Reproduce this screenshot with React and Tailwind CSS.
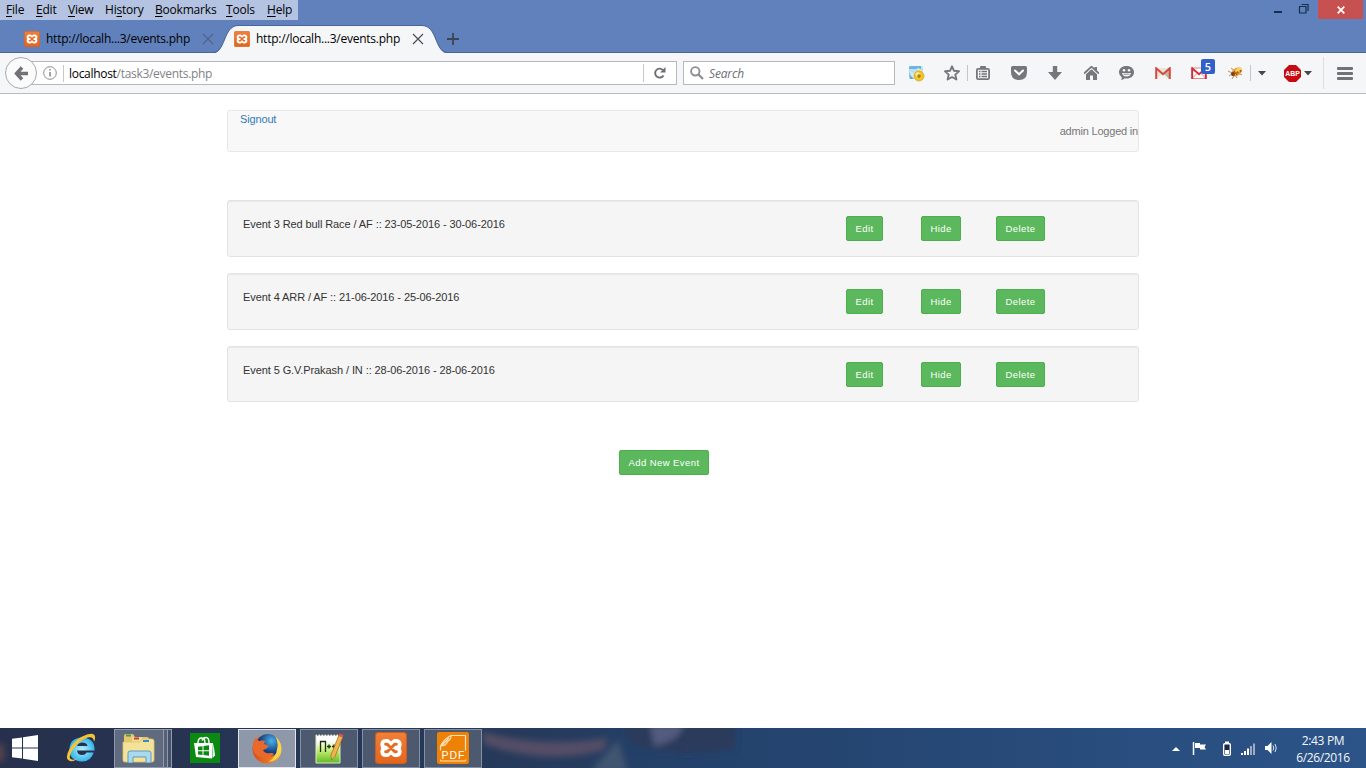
import React from "react";

const ui = "font-['Open_Sans','Noto_Sans',sans-serif]";

function Xampp({ size, id }) {
  return (
    <svg width={size} height={size} viewBox="0 0 30 30" className="block shrink-0">
      <defs>
        <linearGradient id={id} x1="0" y1="0" x2="0" y2="1">
          <stop offset="0" stopColor="#f0803a" />
          <stop offset="1" stopColor="#e4651c" />
        </linearGradient>
      </defs>
      <rect x="0.5" y="0.5" width="29" height="29" rx="3" fill={`url(#${id})`} stroke="#d05c1c" />
      <path
        d="M10.500 9h1l3.500 3.200L18.500 9h1q3 0 3 3 0 1.800-1.500 3 1.500 1.200 1.500 3 0 3-3 3h-1L15 17.800 11.500 21h-1q-3 0-3-3 0-1.800 1.500-3-1.500-1.200-1.500-3 0-3 3-3z"
        fill="#fff"
        stroke="#fff"
        strokeWidth="5"
        strokeLinejoin="round"
      />
      <path
        d="M10 11.500h1.500L15 15l3.500-3.500H20M10 18.500h1.500L15 15l3.500 3.500H20"
        fill="none"
        stroke="#e66b22"
        strokeWidth="2.800"
        strokeLinecap="round"
        strokeLinejoin="round"
      />
    </svg>
  );
}

const menus = [
  ["", "F", "ile", "w-[30px]"],
  ["", "E", "dit", "w-[32px]"],
  ["", "V", "iew", "w-[37px]"],
  ["Hi", "s", "tory", "w-[50px]"],
  ["", "B", "ookmarks", "w-[71px]"],
  ["", "T", "ools", "w-[41px]"],
  ["", "H", "elp", "w-[31px]"],
];

function CloseX({ color }) {
  return (
    <svg width="12" height="12" viewBox="0 0 12 12" className="shrink-0">
      <path d="M1 1L11 11M11 1L1 11" stroke={color} strokeWidth="1.200" />
    </svg>
  );
}

function TitleBar() {
  return (
    <div className="flex h-[20px] justify-between">
      <div className={`flex h-[20px] w-[298px] items-center bg-[#b3c3e1] pl-[6px] text-[12px] leading-[20px] text-black ${ui}`}>
        {menus.map(([a, u, b, w]) => (
          <span key={u + b} className={`${w} shrink-0 whitespace-nowrap tracking-[-0.200px]`}>
            {a}
            <span className="underline underline-offset-2">{u}</span>
            {b}
          </span>
        ))}
      </div>
      <div className="flex h-[19px]">
        <svg width="52" height="19" viewBox="0 0 52 19">
          <path d="M8 12h8" stroke="#172f4c" strokeWidth="2" />
          <path d="M33.500 6.500h6.500v6.500h-6.500zM35.500 4.500h6.500V11" fill="none" stroke="#172f4c" strokeWidth="1.200" />
        </svg>
        <div className="flex w-[45px] items-center justify-center bg-[#c75050]">
          <svg width="8" height="8" viewBox="0 0 8 8">
            <path d="M0.700 0.700l6.600 6.600M7.300 0.700L0.700 7.300" stroke="#fff" strokeWidth="1.700" />
          </svg>
        </div>
        <div className="w-[3px]" />
      </div>
    </div>
  );
}

function Tabs() {
  const title = "w-[152px] shrink-0 whitespace-nowrap text-[12px] tracking-[-0.250px] text-black";
  return (
    <div className={`flex h-[33px] items-center border-b border-[#49659a] pt-[5px] ${ui}`}>
      <div className="flex w-[210px] items-center pl-[24px]">
        <Xampp size={16} id="xa" />
        <span className={`ml-[6px] ${title}`}>http://localh...3/events.php</span>
        <span className="ml-[4px] flex"><CloseX color="#50638a" /></span>
      </div>
      <div className="relative flex h-[28px] w-[238px] items-center">
        <svg width="238" height="29" viewBox="0 0 238 29" className="absolute left-0 top-0">
          <path d="M3 28.500C16 28 13 1 28 .5H212C228 1 224 28 238 28.500V29H3z" fill="#f5f6f7" />
          <path d="M3 27.500C16 27 13 1 28 .5H212C228 1 224 27 238 27.500" fill="none" stroke="#49659a" strokeWidth="1" />
        </svg>
        <div className="relative flex items-center pl-[24px]">
          <Xampp size={16} id="xb" />
          <span className={`ml-[6px] ${title}`}>http://localh...3/events.php</span>
          <span className="ml-[4px] flex"><CloseX color="#4a4d52" /></span>
        </div>
      </div>
      <svg width="12" height="12" viewBox="0 0 12 12" className="-ml-px">
        <path d="M6 0v12M0 6h12" stroke="#3c4553" strokeWidth="1.800" />
      </svg>
    </div>
  );
}

const g = "#75777b";

function Slot({ w, children }) {
  return <div className={`${w} flex h-[40px] shrink-0 items-center justify-center`}>{children}</div>;
}

function Caret() {
  return (
    <svg width="8" height="5" viewBox="0 0 8 5">
      <path d="M0 0h8L4 4.500z" fill="#45484c" />
    </svg>
  );
}

function Toolbar() {
  return (
    <div className={`flex h-[41px] items-center border-b border-[#b9bbbf] bg-[#f5f6f7] ${ui}`}>
      <div className="z-10 ml-[5px] flex h-[32px] w-[32px] shrink-0 items-center justify-center rounded-full border border-[#a7a9ac] bg-[#fbfbfb]">
        <svg width="15" height="15" viewBox="0 0 15 15">
          <path d="M8 1.500L2.500 7.500 8 13.500M3 7.500h11" fill="none" stroke="#707276" strokeWidth="3.400" />
        </svg>
      </div>
      <div className="-ml-[7px] flex h-[24px] w-[647px] shrink-0 items-center border border-[#b5b8bc] bg-white">
        <svg width="14" height="14" viewBox="0 0 14 14" className="ml-[12px]">
          <circle cx="7" cy="7" r="6.300" fill="none" stroke="#8b8d91" />
          <path d="M7 6v4.500M7 3v1.600" stroke="#8b8d91" strokeWidth="1.600" />
        </svg>
        <div className="ml-[6px] h-[17px] w-px bg-[#c6c8ca]" />
        <span className="ml-[5px] mt-[2px] w-[574px] whitespace-nowrap text-[12px] tracking-[-0.300px] text-[#808285]">
          <span className="text-black">localhost</span>/task3/events.php
        </span>
        <div className="h-[18px] w-px bg-[#c6c8ca]" />
        <div className="flex flex-1 justify-center">
          <svg width="12" height="12" viewBox="0 0 12 12">
            <path d="M9.500 8.500A4.500 4.500 0 1 1 8.800 2.900" fill="none" stroke="#6c6e72" strokeWidth="1.900" />
            <path d="M11.500 0v5.500H6z" fill="#6c6e72" />
          </svg>
        </div>
      </div>
      <div className="ml-[6px] flex h-[24px] w-[212px] shrink-0 items-center border border-[#b5b8bc] bg-white pl-[6px]">
        <svg width="14" height="14" viewBox="0 0 14 14">
          <circle cx="5.300" cy="5.300" r="4.200" fill="none" stroke="#8b8d90" strokeWidth="1.900" />
          <path d="M8.500 8.500l4.500 4.500" stroke="#8b8d90" strokeWidth="2.200" />
        </svg>
        <span className="ml-[5px] mt-[2px] text-[12px] italic tracking-[-0.150px] text-[#6d6f73]">Search</span>
      </div>
      <div className="w-[3px] shrink-0" />
      <Slot w="w-[36px]">
        <svg width="17" height="17" viewBox="0 0 17 17">
          <rect x="1" y="1" width="14" height="13" rx="1.500" fill="#b9def5" />
          <path d="M1 2q0-1 2-1h10v3H1z" fill="#6fb3e6" />
          <path d="M2 6q5 5 12-1l1 9H3z" fill="#cfeaf8" />
          <path d="M1 7q1 4 5 7H2z" fill="#5fa8db" />
          <path d="M9.500 3.500l4 3" stroke="#e4efa8" strokeWidth="2" />
          <circle cx="11" cy="11" r="5" fill="#f4c324" stroke="#d2a11f" strokeWidth=".7" />
          <circle cx="9.800" cy="9.500" r="2.200" fill="#ffea83" />
          <path d="M11 9v4M9 11h4" stroke="#94650a" />
        </svg>
      </Slot>
      <Slot w="w-[36px]">
        <svg width="16" height="16" viewBox="0 0 16 16">
          <path d="M8 1.300l2 4.500 5 .5-3.700 3.300 1.100 4.900L8 12l-4.400 2.500 1.100-4.900L1 6.300l5-.5z" fill="none" stroke={g} strokeWidth="1.900" strokeLinejoin="round" />
        </svg>
      </Slot>
      <div className="-ml-[3px] h-[16px] w-px shrink-0 bg-[#c4c6c9]" />
      <Slot w="w-[30px]">
        <svg width="14" height="14" viewBox="0 0 14 14">
          <path d="M4 2.500V1q0-1 1-1h4q1 0 1 1v1.500" fill={g} />
          <rect x="0.900" y="2.900" width="12.200" height="10.200" rx="1.300" fill="#f5f6f7" stroke={g} strokeWidth="1.800" />
          <path d="M3 5.500h1.500M5.500 5.500H11M3 8h1.500M5.500 8H11M3 10.500h1.500M5.500 10.500H11" stroke={g} strokeWidth="1.500" />
        </svg>
      </Slot>
      <div className="w-[3px] shrink-0" />
      <Slot w="w-[36px]">
        <svg width="16" height="14" viewBox="0 0 16 14">
          <path d="M1.500 0h13Q16 0 16 1.500V6q0 8-8 8T0 6V1.500Q0 0 1.500 0z" fill={g} />
          <path d="M4 4.500l4 3.800 4-3.800" fill="none" stroke="#fff" strokeWidth="2" strokeLinecap="round" />
        </svg>
      </Slot>
      <Slot w="w-[36px]">
        <svg width="14" height="14" viewBox="0 0 14 14"><path d="M4.800 0h4.400v6H14l-7 8-7-8h4.800z" fill={g} /></svg>
      </Slot>
      <Slot w="w-[36px]">
        <svg width="15" height="14" viewBox="0 0 15 14">
          <path d="M0 7.500L7.500.7 15 7.500" fill="none" stroke={g} strokeWidth="1.800" />
          <path d="M10.500 1H13v4l-2.500-2zM2 8.300l5.500-5 5.500 5V14H9V9.500H6V14H2z" fill={g} />
        </svg>
      </Slot>
      <div className="-ml-px shrink-0" />
      <Slot w="w-[36px]">
        <svg width="15" height="14" viewBox="0 0 15 14">
          <path d="M7.500 0C12 0 15 2.600 15 6.200S12 12.500 7.500 12.500q-1 0-1.800-.2Q4 14 2 13.800q1-1.300.8-2.600Q0 9.500 0 6.200C0 2.600 3 0 7.500 0z" fill={g} />
          <circle cx="5" cy="4.300" r="1.300" fill="#f5f6f7" /><circle cx="10" cy="4.300" r="1.300" fill="#f5f6f7" />
          <path d="M3 7h9q-.7 3.500-4.500 3.500T3 7z" fill="#f5f6f7" />
          <path d="M4.500 8.200h6" stroke={g} strokeWidth=".8" />
        </svg>
      </Slot>
      <div className="w-px shrink-0" />
      <Slot w="w-[36px]">
        <svg width="16" height="12" viewBox="0 0 16 12">
          <path d="M1 1h14v11H1z" fill="#e8e4dc" />
          <path d="M8 7l7-6v11h-1z" fill="#bdb8a9" /><path d="M1 12l7-6 6 6z" fill="#f6f4ef" />
          <path d="M1.200 12V1.200L8 7.200l6.800-6V12" fill="none" stroke="#d9483d" strokeWidth="2" />
        </svg>
      </Slot>
      <div className="relative flex h-[40px] w-[36px] shrink-0 items-center justify-center">
        <svg width="16" height="12" viewBox="0 0 16 12">
          <path d="M1 1h14v10.500H1z" fill="#fff" stroke="#d88a88" />
          <path d="M1 11.500l5-5M15 11.500l-5-5" stroke="#d88a88" />
          <path d="M1.200 12V1.200L8 7.200l6.800-6V12" fill="none" stroke="#d12f37" strokeWidth="1.900" />
        </svg>
        <span className="absolute left-[20px] top-[6px] flex h-[15px] w-[14px] items-center justify-center rounded-[2px] bg-[#3060c8] text-[11px] font-semibold leading-[15px] text-white">5</span>
      </div>
      <Slot w="w-[36px]">
        <svg width="17" height="14" viewBox="0 0 17 14">
          <path d="M1 5l4 2M2 10l4-3M5 13l3-5M10 12l-2-3M4 2l4 3M15 9l-4-2" stroke="#8c673f" strokeWidth=".7" />
          <ellipse cx="9.500" cy="6" rx="6" ry="3.800" transform="rotate(-33 9.500 6)" fill="#e3a02e" />
          <ellipse cx="11.500" cy="4" rx="3.500" ry="2" transform="rotate(-33 11.500 4)" fill="#f7d071" />
          <circle cx="6" cy="8" r="2" fill="#7c3e16" />
          <circle cx="10.500" cy="6.500" r="1.200" fill="#c9541a" /><circle cx="13.500" cy="5" r="1" fill="#b55220" />
          <path d="M7 5l3 4" stroke="#8e4b1b" />
        </svg>
      </Slot>
      <div className="-ml-[3px] h-[16px] w-px shrink-0 bg-[#c4c6c9]" />
      <Slot w="w-[21px]"><Caret /></Slot>
      <div className="ml-[12px] flex shrink-0 items-center">
        <svg width="17" height="17" viewBox="0 0 17 17">
          <path d="M5 0h7l5 5v7l-5 5H5l-5-5V5z" fill="#c80b12" />
          <text x="8.500" y="11.200" textAnchor="middle" fontFamily="Liberation Sans" fontWeight="700" fontSize="7.500" textLength="14.500" lengthAdjust="spacingAndGlyphs" fill="#fff">ABP</text>
        </svg>
        <span className="ml-[3px]"><Caret /></span>
      </div>
      <div className="ml-[11px] h-[32px] w-px shrink-0 bg-[#dddfe1]" />
      <Slot w="w-[42px]">
        <svg width="16" height="13" viewBox="0 0 16 13">
          <path d="M1 1.500h14M1 6.500h14M1 11.500h14" stroke="#707276" strokeWidth="2.800" strokeLinecap="round" />
        </svg>
      </Slot>
    </div>
  );
}

function Btn({ w, children }) {
  return (
    <button className={`${w} h-[25px] shrink-0 whitespace-nowrap rounded-[2px] border border-[#4cae4c] bg-[#5cb85c] text-center text-[9.500px] leading-[22px] tracking-[0.420px] text-white`}>
      {children}
    </button>
  );
}

const events = [
  ["Event 3 Red bull Race / AF :: 23-05-2016 - 30-06-2016", "h-[57px]"],
  ["Event 4 ARR / AF :: 21-06-2016 - 25-06-2016", "h-[57px]"],
  ["Event 5 G.V.Prakash / IN :: 28-06-2016 - 28-06-2016", "h-[56px]"],
];

function Page() {
  return (
    <main className="h-[634px] bg-white pt-[16px] font-['Liberation_Sans',Arial,sans-serif] text-[11px] text-[#333]">
      <div className="mx-auto w-[912px]">
        <nav className="flex h-[42px] justify-between rounded-[3px] border border-[#e7e7e7] bg-[#f8f8f8] pl-[12px]">
          <a className="leading-[17px] tracking-[-0.150px] text-[#337ab7]">Signout</a>
          <span className="leading-[41px] tracking-[-0.200px] text-[#777]">admin Logged in</span>
        </nav>
        <div className="mt-[48px] flex flex-col gap-[16px]">
          {events.map(([label, h]) => (
            <div key={label} className={`${h} flex items-start rounded-[3px] border border-[#e3e3e3] bg-[#f5f5f5] pl-[15px] pt-[15px] shadow-[inset_0_1px_1px_rgba(0,0,0,0.05)]`}>
              <span className="w-[603px] whitespace-nowrap leading-[16px] tracking-[-0.090px]">{label}</span>
              <div className="flex">
                <div className="w-[75px]"><Btn w="w-[37px]">Edit</Btn></div>
                <div className="w-[75px]"><Btn w="w-[40px]">Hide</Btn></div>
                <Btn w="w-[49px]">Delete</Btn>
              </div>
            </div>
          ))}
        </div>
        <div className="mt-[48px] pl-[392px]"><Btn w="w-[90px]">Add New Event</Btn></div>
      </div>
    </main>
  );
}

function TaskBtn({ active, children }) {
  return (
    <div className={`flex h-[39px] w-[58px] shrink-0 items-center justify-center border ${active ? "border-[#e1e4ea] bg-[#8f98a9]" : "border-[#8690a3] bg-[#4d596f]"}`}>
      {children}
    </div>
  );
}

function Taskbar() {
  return (
    <footer className={`relative flex h-[40px] items-center overflow-hidden bg-linear-to-r from-[#26304c] via-[#23416a] via-50% to-[#2c5489] ${ui}`}>
      <svg width="900" height="40" viewBox="0 0 900 40" className="absolute left-0 top-0">
        <defs>
          <filter id="soft" x="-20%" y="-50%" width="140%" height="200%"><feGaussianBlur stdDeviation="3" /></filter>
          <linearGradient id="edge"><stop offset="0" stopColor="#26304c" /><stop offset=".9" stopColor="#263b5d" /><stop offset="1" stopColor="#263b5d" stopOpacity="0" /></linearGradient>
        </defs>
        <rect width="630" height="40" fill="url(#edge)" />
        <g filter="url(#soft)">
          <path d="M482 4Q540 20 608 10L604 22Q545 38 484 16z" fill="#544e66" />
          <path d="M590 44l28-32 10 32z" fill="#405570" />
          <path d="M620 -8h115v28q-55 12-105-4z" fill="#293a5b" />
          <path d="M650 -4h34q-5 18-30 22z" fill="#535b7e" />
          <ellipse cx="0" cy="25" rx="4" ry="10" fill="#5d454c" />
        </g>
      </svg>
      <div className="relative flex w-full items-center">
        <svg width="26" height="26" viewBox="0 0 26 26" className="ml-[12px]">
          <path d="M0 3.800l10-1.400v10H0zM11 2.200L26 0v12.400H11zM0 13.500h10v10L0 22.200zM11 13.500h15V26l-15-2.200z" fill="#fff" />
        </svg>
        <svg width="32" height="32" viewBox="0 0 32 32" className="ml-[27px]">
          <defs><radialGradient id="ie"><stop offset="0" stopColor="#b9f0fc" /><stop offset="1" stopColor="#35b4ea" /></radialGradient></defs>
          <path d="M29.500 18.500H12q.6 4.500 5 4.500 3.300 0 4.700-2.500h7Q26 29.500 17 29.500 4.500 29 4.500 17.500T17 5.500Q30 6 29.500 18.500zM12 14h10.500q-.5-3.500-5-3.500T12 14z" fill="url(#ie)" fillRule="evenodd" />
          <path d="M5 29Q-1 27 4.500 17 11 6 22 2.500 31-.5 30 7l-1 3Q29 4 22.500 5.500 13 9 7 19 2.500 26.500 7 27.500q3 .5 6-1Q8 30 5 29z" fill="#f3c435" />
        </svg>
        <div className="ml-[17px] flex h-[39px] w-[50px] items-center justify-center border border-[#909aaa] bg-[#606b80]">
          <svg width="34" height="30" viewBox="0 0 34 30">
            <path d="M2 3q0-2 2-2h7l2 3h12q2 0 2 2v21H2z" fill="#e6c770" />
            <path d="M4 2.500h5" stroke="#36a454" strokeWidth="2" />
            <path d="M10 4h9l2 3h9v18H10z" fill="#f2dc8f" />
            <path d="M12 5.500h5" stroke="#cf3b2e" strokeWidth="2" />
            <path d="M1 9h17l3-3h9q2 0 2 2v19q0 2-2 2H3q-2 0-2-2z" fill="#f5e29a" stroke="#dfc36c" strokeWidth=".8" />
            <path d="M21 8h6" stroke="#318acb" strokeWidth="2" />
            <path d="M6 30V20q0-2 2-2h19q2 0 2 2v10h-5v-6H11v6z" fill="#a8d9ef" stroke="#5a9dbf" />
          </svg>
        </div>
        <div className="h-[39px] w-[4px] border-y border-r border-[#909aaa] bg-[#566177]" />
        <div className="h-[39px] w-[4px] border-y border-r border-[#909aaa] bg-[#46526b]" />
        <svg width="30" height="30" viewBox="0 0 30 30" className="ml-[18px]">
          <path d="M0 0h30v30H0z" fill="#0b8a13" />
          <path d="M4 10h19l-1 15.500L6 24zM23.500 10.500l1.500 12-2.500 2.500z" fill="#fff" />
          <path d="M8 10q0-5 3.500-5T15 10M12 7.500q1-3 4-3T19 10" fill="none" stroke="#fff" strokeWidth="1.400" />
          <path d="M8 13.800l4.500-.6v4H8zM13.500 13l5.500-.7v4.900h-5.500zM8 18.200h4.500v3.800l-4.500-.5zM13.500 18.200H19v4.500l-5.500-.6z" fill="#0b8a13" />
        </svg>
        <div className="ml-[18px] flex gap-[4px]">
          <TaskBtn active>
            <svg width="30" height="31" viewBox="0 0 30 31">
              <defs>
                <radialGradient id="ff" cx=".65" cy=".3"><stop offset="0" stopColor="#4cb3e6" /><stop offset="1" stopColor="#123f85" /></radialGradient>
                <linearGradient id="fx"><stop offset="0" stopColor="#d94a1b" /><stop offset=".65" stopColor="#ee7b20" /><stop offset="1" stopColor="#fbd43b" /></linearGradient>
              </defs>
              <circle cx="15" cy="16" r="14.500" fill="url(#fx)" />
              <circle cx="16" cy="12.500" r="11.500" fill="url(#ff)" />
              <path d="M3 5l4 3q4-1 6 0l-1 3 5 2-3 3-3 1q2 4 7 3 3-.5 4 1-3 5-9 4Q2 24 1 16 .5 9 3 5z" fill="#e8692a" />
              <path d="M23 3q8 7 5.500 16-3 9-12 10 8-5 8.500-13 2-7-2-13z" fill="#fbd449" />
            </svg>
          </TaskBtn>
          <TaskBtn>
            <svg width="32" height="32" viewBox="0 0 32 32">
              <defs><linearGradient id="np" x1="0" y1="0" x2="0" y2="1"><stop offset=".2" stopColor="#fff" /><stop offset=".55" stopColor="#c6ec76" /><stop offset="1" stopColor="#5ebc1f" /></linearGradient></defs>
              <path d="M3 3h24v28H3z" fill="url(#np)" stroke="#dce8cd" />
              <path d="M4 2.500h22" stroke="#4b5060" strokeWidth="2" strokeDasharray="1.500 1.500" />
              <path d="M7.500 20V9.500h5V20M14 14.500h4M16 12.500v4M19 14.500h4M21 12.500v4" fill="none" stroke="#1b2c10" strokeWidth="1.300" />
              <path d="M26 3l4 1.500-8 20-3.500 3.500-.5-5z" fill="#f1b548" stroke="#98642a" strokeWidth=".7" />
              <path d="M26.500 1.500l4 1.500-1 2.500-4-1.500z" fill="#d6574e" />
            </svg>
          </TaskBtn>
          <TaskBtn><Xampp size={32} id="xc" /></TaskBtn>
          <TaskBtn>
            <svg width="32" height="32" viewBox="0 0 32 32">
              <rect width="32" height="32" rx="2" fill="#ee8206" />
              <path d="M3.500 18.500V14Q8 6 14 3.500h14.500v15M3.500 14Q9 14 10.500 9.500 14 8 14 3.500M4 14l8-8" fill="none" stroke="#ffe2bd" strokeWidth="1.200" />
              <path d="M3.500 27.500V29h25v-1.500" fill="none" stroke="#ffe2bd" />
              <text x="16.500" y="27.300" textAnchor="middle" fontFamily="Liberation Sans" fontSize="10.500" letterSpacing="1" fill="#fff">PDF</text>
            </svg>
          </TaskBtn>
        </div>
        <div className="ml-auto flex items-center pr-[16px] text-[#f5f7fa]">
          <svg width="112" height="20" viewBox="0 0 112 20" className="mr-[16px]">
            <path d="M4 13l4-4 4 4z" fill="#fff" />
            <path d="M25.500 4v13" stroke="#fff" strokeWidth="1.500" />
            <path d="M27 5h5v1.500h6l-1.500 2.500 1.500 2.500h-6V10h-5z" fill="#fff" />
            <path d="M57 4.500h4" stroke="#fff" strokeWidth="2" />
            <rect x="55.700" y="5.700" width="6.600" height="11.600" rx="1" fill="#172945" stroke="#fff" strokeWidth="1.400" />
            <path d="M57 12h4v4h-4z" fill="#fff" />
            <path d="M73 15h2v2h-2zM76 13h2v4h-2zM79 10.500h2V17h-2z" fill="#fff" />
            <path d="M82 8h2v9h-2zM85 5.500h2V17h-2z" fill="#9dacc2" />
            <path d="M97 8h2.500l4-4v12l-4-4H97z" fill="#fff" />
            <path d="M105 7.500q1.500 2.500 0 5M107 6q2.500 4 0 8" fill="none" stroke="#dce5f0" />
          </svg>
          <div className="mt-[2px] w-[54px] whitespace-nowrap text-center text-[12px] leading-[17px] tracking-[-0.350px]">
            <div>2:43 PM</div>
            <div>6/26/2016</div>
          </div>
        </div>
      </div>
    </footer>
  );
}

export default function App() {
  return (
    <div className="h-[768px] w-[1366px] overflow-hidden bg-[#6081bc]">
      <TitleBar />
      <Tabs />
      <Toolbar />
      <Page />
      <Taskbar />
    </div>
  );
}
